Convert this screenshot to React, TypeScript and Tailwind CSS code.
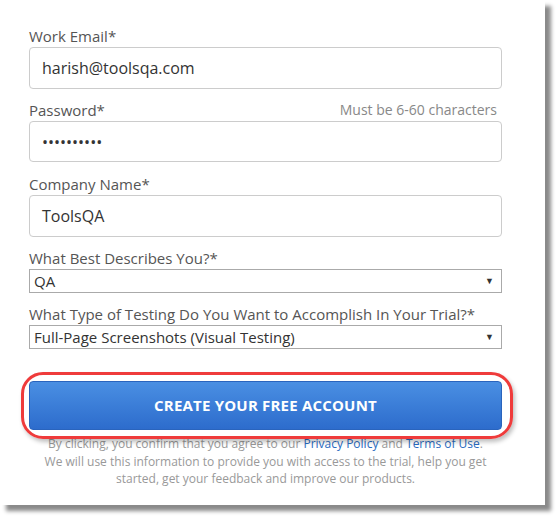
import React from "react";

const font = { fontFamily: '"Open Sans", "Noto Sans", sans-serif' };

function Label({ children, right }: { children: React.ReactNode; right?: string }) {
  return (
    <div className="flex items-end justify-between h-[20px] mb-[1px]">
      <span className="text-[15px] leading-[20px] text-[#555]">{children}</span>
      {right && <span className="text-[14px] leading-[20px] text-[#888] mr-[5px]">{right}</span>}
    </div>
  );
}

function TextInput({ value }: { value: string }) {
  return (
    <div className="h-[42px] border border-[#ccc] rounded-[4px] bg-white flex items-center px-[12px] text-[16px] text-[#333]">
      {value}
    </div>
  );
}

function SelectBox({ value, h }: { value: string; h: string }) {
  return (
    <div className={`${h} border border-[#aaa] bg-white flex items-center justify-between pl-[4px] pr-[7px] text-[15px] text-[#333]`}>
      <span>{value}</span>
      <span className="text-[9px] text-[#333]">▼</span>
    </div>
  );
}

export default function App() {
  return (
    <div className="w-[560px] h-[520px] bg-white" style={font}>
      <div className="w-[545px] h-[505px] bg-white shadow-[6px_6px_4px_#8a8a8a] pt-[26px] pl-[29px]">
        <div className="w-[473px]">
          <Label>Work Email*</Label>
          <TextInput value="harish@toolsqa.com" />
          <div className="h-[11px]" />
          <Label right="Must be 6-60 characters">Password*</Label>
          <div className="h-[41px] border border-[#ccc] rounded-[4px] bg-white flex items-center px-[12px] text-[16px] text-[#333]">
            ••••••••••
          </div>
          <div className="h-[12px]" />
          <Label>Company Name*</Label>
          <TextInput value="ToolsQA" />
          <div className="h-[11px]" />
          <Label>What Best Describes You?*</Label>
          <SelectBox value="QA" h="h-[24px]" />
          <div className="h-[11px]" />
          <Label>What Type of Testing Do You Want to Accomplish In Your Trial?*</Label>
          <SelectBox value="Full-Page Screenshots (Visual Testing)" h="h-[24px]" />
          <div className="h-[32px]" />
          <div className="relative">
            <div className="h-[49px] rounded-[4px] bg-gradient-to-b from-[#4a8fe3] to-[#2d6ccc] border border-[#2a64bd] flex items-center justify-center text-white font-bold text-[15px] tracking-[0.2px]">
              CREATE YOUR FREE ACCOUNT
            </div>
          </div>
          <div className="relative">
            <div className="absolute left-[-8px] right-[-11px] top-[-58px] h-[67px] rounded-[22px] border-[3px] border-[#ef3b3b] shadow-[2px_3px_4px_rgba(0,0,0,0.25)]" />
            <div className="pt-[5px] text-center text-[12px] leading-[17.5px] text-[#999]">
              By clicking, you confirm that you agree to our <span className="text-[#2a6bbf]">Privacy Policy</span> and <span className="text-[#2a6bbf]">Terms of Use</span>.
              <br />
              We will use this information to provide you with access to the trial, help you get
              <br />
              started, get your feedback and improve our products.
            </div>
          </div>
        </div>
      </div>
    </div>
  );
}
